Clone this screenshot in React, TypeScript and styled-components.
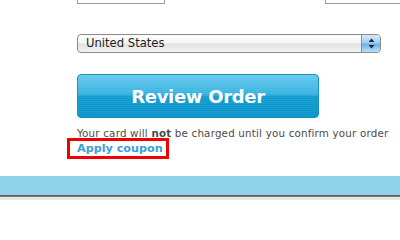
import React from "react";
import styled, { createGlobalStyle } from "styled-components";

const GlobalStyle = createGlobalStyle`
  html, body {
    margin: 0;
    padding: 0;
    background: #ffffff;
    font-family: "DejaVu Sans", "Liberation Sans", sans-serif;
  }
`;

const Page = styled.div`
  width: 400px;
  height: 200px;
  overflow: hidden;
  display: flex;
  flex-direction: column;
`;

const Content = styled.div`
  padding-left: 77px;
  display: flex;
  flex-direction: column;
  align-items: flex-start;
  flex-shrink: 0;
`;

const FieldRow = styled.div`
  display: flex;
  height: 4px;
  gap: 160px;
`;

const CutField = styled.div<{ $width: number }>`
  width: ${({ $width }) => $width}px;
  height: 3px;
  flex-shrink: 0;
  border: 1px solid #9a9a9a;
  border-top: none;
  background: #fff;
`;

const Select = styled.div`
  margin-top: 30px;
  width: 304px;
  height: 19px;
  box-sizing: border-box;
  border: 1px solid #8a8a8a;
  border-radius: 4px;
  background: linear-gradient(#ffffff 0%, #f4f4f4 45%, #e2e2e2 55%, #f2f2f2 100%);
  display: flex;
  align-items: center;
  overflow: hidden;
`;

const SelectLabel = styled.span`
  flex: 1;
  padding-left: 8px;
  font-size: 11.6px;
  color: #1e1e1e;
  line-height: 17px;
`;

const SelectArrows = styled.div`
  width: 18px;
  height: 100%;
  border-left: 1px solid #6f8fb4;
  background: linear-gradient(#d6ebfa 0%, #9fcdf0 45%, #6fb2e6 55%, #b9e0fa 100%);
  display: flex;
  align-items: center;
  justify-content: center;
`;

const ReviewButton = styled.button`
  margin-top: 21px;
  width: 242px;
  height: 44px;
  border: 1px solid #1793c4;
  border-radius: 4px;
  background:
    repeating-linear-gradient(rgba(255, 255, 255, 0.06) 0 1px, transparent 1px 2px),
    linear-gradient(#66c8ec 0%, #38b3e2 45%, #109bd0 52%, #0a94c9 100%);
  color: #ffffff;
  font-family: "DejaVu Sans", "Liberation Sans", sans-serif;
  font-weight: bold;
  font-size: 18px;
  letter-spacing: -0.3px;
  padding: 0;
  cursor: pointer;
`;

const Note = styled.p`
  margin: 10px 0 0 0;
  font-size: 10.3px;
  line-height: 10px;
  color: #4a4a4a;
  white-space: nowrap;
  letter-spacing: 0.2px;
`;

const CouponBox = styled.div`
  margin-left: -10px;
  width: 102px;
  height: 21px;
  box-sizing: border-box;
  border: 3px solid #f20000;
  display: flex;
  align-items: center;
  padding-left: 7px;
`;

const CouponLink = styled.a`
  font-size: 11.2px;
  font-weight: bold;
  color: #3ba0cf;
  text-decoration: none;
  white-space: nowrap;
`;

const Band = styled.div`
  margin-top: 17px;
  height: 19px;
  flex-shrink: 0;
  background: #8fd2e9;
`;

const BandEdge = styled.div`
  height: 2px;
  flex-shrink: 0;
  background: linear-gradient(#4a4a4a, #8a8a8a);
`;

const Footer = styled.div`
  flex: 1;
  background: #e6e6e6;
`;

const App: React.FC = () => {
  return (
    <Page>
      <GlobalStyle />
      <Content>
        <FieldRow>
          <CutField $width={86} />
          <CutField $width={90} />
        </FieldRow>
        <Select>
          <SelectLabel>United States</SelectLabel>
          <SelectArrows>
            <svg width="7" height="11" viewBox="0 0 7 11">
              <path d="M3.5 0.5 L6.5 4 L0.5 4 Z" fill="#1a2a44" />
              <path d="M3.5 10.5 L6.5 7 L0.5 7 Z" fill="#1a2a44" />
            </svg>
          </SelectArrows>
        </Select>
        <ReviewButton>Review Order</ReviewButton>
        <Note>
          Your card will <b>not</b> be charged until you confirm your order
        </Note>
        <CouponBox>
          <CouponLink href="#">Apply coupon</CouponLink>
        </CouponBox>
      </Content>
      <Band />
      <BandEdge />
      <Footer />
    </Page>
  );
};

export default App;
